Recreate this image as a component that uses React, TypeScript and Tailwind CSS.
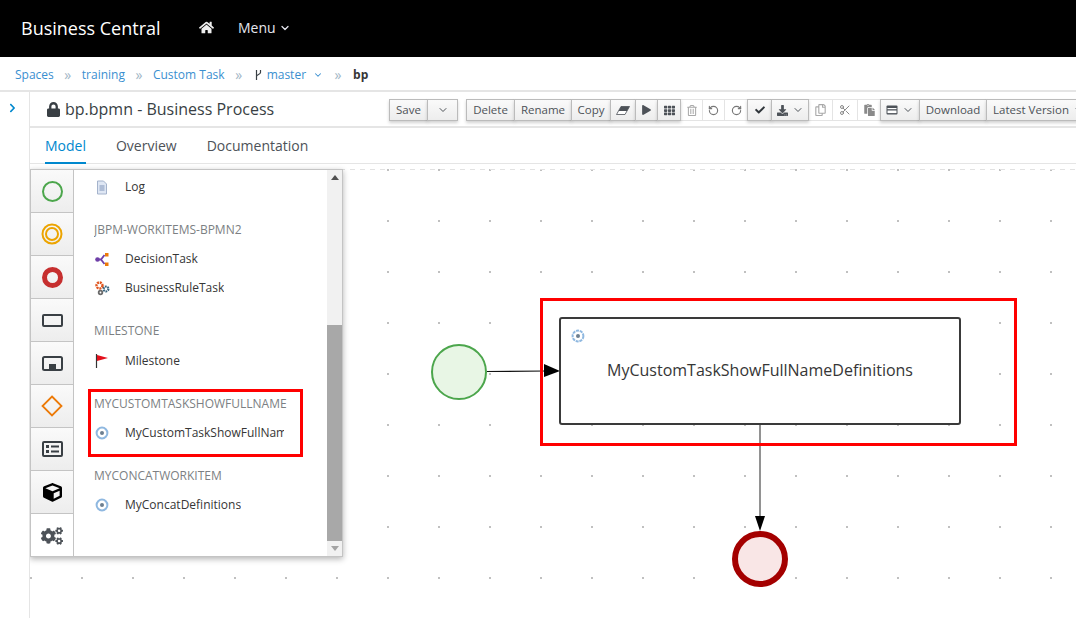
import React from "react";
import { FaHome, FaLock, FaPlay, FaTh, FaRegTrashAlt, FaCheck, FaDownload, FaRegCopy, FaPaste, FaCube, FaCogs, FaChevronRight } from "react-icons/fa";
import { LuChevronDown, LuRotateCcw, LuRotateCw, LuScissors } from "react-icons/lu";

const F = { fontFamily: '"Open Sans", "Liberation Sans", sans-serif' };

function Btn({ w, children, off }: { w: string; children: React.ReactNode; off?: boolean }) {
  return (
    <div className={`${w} h-[22px] -ml-px first:ml-0 flex items-center justify-center gap-1 border text-[11.5px] shrink-0 ${off ? "border-[#e4e4e4] bg-white text-[#a9a9a9]" : "border-[#bbbbbb] bg-gradient-to-b from-[#fafafa] to-[#ededed] text-[#4d5258] shadow-[0_2px_3px_rgba(0,0,0,0.18)] z-10"}`}>
      {children}
    </div>
  );
}

function Chev() {
  return <LuChevronDown className="text-[#4d5258] w-3 h-3" />;
}

function Sep({ w }: { w: string }) {
  return <span className={`${w} text-center text-[14px] leading-none text-[#9fb6c6] shrink-0`}>»</span>;
}

function Cell({ children, active }: { children: React.ReactNode; active?: boolean }) {
  return (
    <div className={`h-[43px] shrink-0 flex items-center justify-center border-b border-[#c4c4c4] last:border-b-0 ${active ? "bg-white" : "bg-gradient-to-b from-[#fafafa] to-[#ededed]"}`}>
      {children}
    </div>
  );
}

function Item({ icon, label }: { icon: React.ReactNode; label: string }) {
  return (
    <div className="flex items-center h-[20px]">
      <div className="w-[31px] flex justify-start pl-[1px] shrink-0">{icon}</div>
      <span className="text-[12px] text-[#363636] whitespace-nowrap max-w-[159px] overflow-hidden">{label}</span>
    </div>
  );
}

function Head({ children }: { children: React.ReactNode }) {
  return <div className="text-[12px] text-[#7c7f83] h-[20px] leading-[20px] whitespace-nowrap">{children}</div>;
}

function Svc({ dashed }: { dashed?: boolean }) {
  return (
    <svg width="14" height="14" viewBox="0 0 14 14">
      <circle cx="7" cy="7" r="5.4" fill="#fff" stroke="#8fb8e0" strokeWidth="2" strokeDasharray={dashed ? "3 0.8" : undefined} />
      <circle cx="7" cy="7" r="2" fill="#6d7f90" />
    </svg>
  );
}

export default function App() {
  return (
    <div className="w-[1076px] h-[618px] overflow-hidden bg-white flex flex-col" style={F}>
      <header className="h-[57px] bg-black flex items-center text-white shrink-0">
        <div className="ml-[21px] text-[18px] w-[178px] shrink-0">Business Central</div>
        <FaHome className="w-[15px] h-[15px] text-[#eeeeee] -mt-[3px]" />
        <div className="ml-[24px] flex items-center gap-[3px] text-[14px] text-[#e4e6ee] -mt-[3px]">
          Menu <LuChevronDown className="w-[12px] h-[12px] mt-[1px] stroke-[2.5]" />
        </div>
      </header>

      <nav className="h-[35px] border-b-2 border-[#e5e5e5] flex items-center pl-[15px] pt-[3px] text-[12px] text-[#3a8fd0] shrink-0">
        <span>Spaces</span>
        <Sep w="w-[28px]" />
        <span>training</span>
        <Sep w="w-[28px]" />
        <span>Custom Task</span>
        <Sep w="w-[28px]" />
        <svg width="9" height="12" viewBox="0 0 9 12" className="shrink-0">
          <path d="M3.5 1v10M7.5 1v2.5c0 2-4 2-4 4" fill="none" stroke="#393f44" strokeWidth="1.2" />
        </svg>
        <span className="ml-[5px]">master</span>
        <LuChevronDown className="ml-[7px] w-[10px] h-[10px] stroke-[2.5]" />
        <Sep w="w-[30px]" />
        <span className="font-bold text-[#363636]">bp</span>
      </nav>

      <div className="flex-1 flex min-h-0">
        <aside className="w-[30px] border-r border-[#e5e5e5] shrink-0 pt-[11px] pl-[8px]">
          <FaChevronRight className="w-[9px] h-[10px] text-[#0088ce]" />
        </aside>

        <main className="flex-1 flex flex-col min-w-0">
          <div className="h-[36px] border-b-2 border-[#e5e5e5] flex items-center shrink-0">
            <FaLock className="ml-[17px] w-[13px] h-[15px] text-[#393f44] shrink-0" />
            <span className="ml-[5px] text-[16px] text-[#393f44] w-[324px] shrink-0">bp.bpmn - Business Process</span>
            <div className="flex items-center mt-[2px] shrink-0">
              <Btn w="w-[39px]">Save</Btn>
              <Btn w="w-[31px]"><Chev /></Btn>
            </div>
            <div className="flex items-center ml-[8px] mt-[2px] shrink-0">
              <Btn w="w-[49px]">Delete</Btn>
              <Btn w="w-[58px]">Rename</Btn>
              <Btn w="w-[40px]">Copy</Btn>
              <Btn w="w-[26px]">
                <svg width="14" height="9" viewBox="0 0 14 9"><path d="M5 0.5h8.5L9 8.5H0.5z" fill="#fff" stroke="#4d5258" strokeWidth="0.8" /><path d="M5 0.5h8.5L11 5H2.6z" fill="#4d5258" /></svg>
              </Btn>
              <Btn w="w-[23px]"><FaPlay className="w-[9px] h-[10px]" /></Btn>
              <Btn w="w-[24px]"><FaTh className="w-[11px] h-[11px]" /></Btn>
              <Btn w="w-[23px]" off><FaRegTrashAlt className="w-[10px] h-[11px]" /></Btn>
              <Btn w="w-[23px]" off><LuRotateCcw className="w-[11px] h-[11px] text-[#777] stroke-[2.5]" /></Btn>
              <Btn w="w-[24px]" off><LuRotateCw className="w-[11px] h-[11px] text-[#777] stroke-[2.5]" /></Btn>
              <Btn w="w-[25px]"><FaCheck className="w-[10px] h-[10px] text-[#30363b]" /></Btn>
              <Btn w="w-[38px]"><FaDownload className="w-[11px] h-[11px]" /><Chev /></Btn>
              <Btn w="w-[25px]" off><FaRegCopy className="w-[11px] h-[12px]" /></Btn>
              <Btn w="w-[26px]" off><LuScissors className="w-[12px] h-[12px] text-[#8a8a8a]" /></Btn>
              <Btn w="w-[24px]" off><FaPaste className="w-[11px] h-[12px] text-[#8a8a8a]" /></Btn>
              <Btn w="w-[40px]">
                <svg width="12" height="10" viewBox="0 0 12 10"><rect x="0.5" y="0.5" width="11" height="9" rx="1" fill="#4d5258" /><rect x="1.5" y="3" width="9" height="1.2" fill="#fff" /><rect x="1.5" y="5.5" width="9" height="2.6" fill="#fff" /></svg>
                <Chev />
              </Btn>
              <Btn w="w-[68px]">Download</Btn>
              <Btn w="w-[106px]">
                <span className="whitespace-nowrap">Latest Version</span><Chev />
              </Btn>
            </div>
          </div>

          <div className="h-[36px] border-b border-[#e5e5e5] flex items-stretch pl-[15px] gap-[30px] text-[14px] text-[#4d5258] shrink-0">
            <div className="border-b-2 border-[#0088ce] text-[#0088ce] flex items-center h-[36px]">Model</div>
            <div className="flex items-center">Overview</div>
            <div className="flex items-center">Documentation</div>
          </div>

          <section className="relative flex-1 overflow-hidden bg-[radial-gradient(circle_at_1px_1px,#c0c0c0_1.1px,transparent_1.3px)] bg-[size:51px_51px] bg-[position:0px_5px]">
            <div className="absolute left-0 right-0 top-[5px] h-px bg-[repeating-linear-gradient(90deg,#e2e2e2_0_5px,transparent_5px_10px)]" />

            <svg className="absolute left-0 top-0" width="1046" height="454">
              <line x1="457" y1="207.5" x2="516" y2="207" stroke="#111" strokeWidth="1.2" />
              <polygon points="514,200 530,207 514,213" fill="#000" />
              <line x1="730" y1="261" x2="730" y2="353" stroke="#777" strokeWidth="1.6" />
              <polygon points="725,352 735,352 730,367" fill="#000" />
            </svg>

            <div className="absolute left-[401px] top-[180px] w-[56px] h-[56px] rounded-full border-2 border-[#4ca64c] bg-[#e8f6e5]" />
            <div className="absolute left-[702px] top-[367px] w-[56px] h-[56px] rounded-full border-[6px] border-[#a40000] bg-[#f9e6e6]" />

            <div className="absolute left-[529px] top-[153px] w-[402px] h-[108px] pb-[2px] border-2 border-[#3a3a3a] rounded-[3px] bg-white flex items-center justify-center text-[16px] text-[#363636]">
              <span className="absolute left-[10px] top-[10px] leading-none"><Svc dashed /></span>
              MyCustomTaskShowFullNameDefinitions
            </div>
            <div className="absolute left-[510px] top-[134px] w-[477px] h-[148px] border-[3px] border-[#ff0000]" />

            <div className="absolute left-0 top-[5px] w-[313px] h-[388px] bg-white border border-[#c4c4c4] shadow-[0_2px_6px_rgba(0,0,0,0.3)] flex overflow-hidden">
              <div className="w-[43px] border-r border-[#c4c4c4] flex flex-col shrink-0">
                <Cell><div className="w-[21px] h-[21px] rounded-full border-2 border-[#4ca64c]" /></Cell>
                <Cell>
                  <svg width="22" height="22" viewBox="0 0 22 22"><circle cx="11" cy="11" r="9.5" fill="none" stroke="#eca400" strokeWidth="2" /><circle cx="11" cy="11" r="6" fill="none" stroke="#eca400" strokeWidth="2" /></svg>
                </Cell>
                <Cell><div className="w-[21px] h-[21px] rounded-full border-[5px] border-[#c62f2f]" /></Cell>
                <Cell><div className="w-[21px] h-[13px] rounded-[2px] border-2 border-[#393f44]" /></Cell>
                <Cell>
                  <svg width="21" height="15" viewBox="0 0 21 15"><rect x="1" y="1" width="19" height="13" rx="1.5" fill="none" stroke="#393f44" strokeWidth="2" /><rect x="7" y="8" width="7" height="6" fill="#393f44" /></svg>
                </Cell>
                <Cell>
                  <svg width="22" height="22" viewBox="0 0 22 22"><path d="M11 1.5 L20.5 11 L11 20.5 L1.5 11 Z" fill="none" stroke="#ec7a08" strokeWidth="1.8" /></svg>
                </Cell>
                <Cell>
                  <svg width="21" height="16" viewBox="0 0 21 16"><rect x="1" y="1" width="19" height="14" rx="1" fill="none" stroke="#393f44" strokeWidth="2" /><rect x="4" y="4" width="3" height="3" fill="#393f44" /><rect x="4" y="9" width="3" height="3" fill="#393f44" /><rect x="9" y="4.5" width="8" height="2" fill="#393f44" /><rect x="9" y="9.5" width="8" height="2" fill="#393f44" /></svg>
                </Cell>
                <Cell><FaCube className="w-[19px] h-[19px] text-black" /></Cell>
                <Cell active><FaCogs className="w-[22px] h-[20px] text-[#4d5258]" /></Cell>
              </div>
              <div className="flex-1 min-w-0 flex">
                <div className="w-[220px] ml-[20px] overflow-hidden shrink-0 relative">
                  <div className="absolute top-[7px] left-0 w-full">
                    <Item label="Log" icon={
                      <svg width="14" height="15" viewBox="0 0 14 15"><path d="M2.5 1h6l3 3v10h-9z" fill="#dfe7f4" stroke="#a4b3cc" /><path d="M4.5 6h5M4.5 8h5M4.5 10h5" stroke="#7e93b8" /></svg>
                    } />
                    <div className="mt-[23px]"><Head>JBPM-WORKITEMS-BPMN2</Head></div>
                    <div className="mt-[9px]">
                      <Item label="DecisionTask" icon={
                        <svg width="15" height="15" viewBox="0 0 15 15"><path d="M3 7.5 H6 L9.5 3 M6 7.5 L9.5 12" stroke="#6e3fa8" strokeWidth="1.8" fill="none" /><circle cx="2.5" cy="7.5" r="2.3" fill="#6e3fa8" /><rect x="10" y="1" width="3.5" height="3.5" fill="#ec7a08" /><rect x="10" y="10.5" width="3.5" height="3.5" fill="#ec7a08" /></svg>
                      } />
                    </div>
                    <div className="mt-[9px]">
                      <Item label="BusinessRuleTask" icon={
                        <svg width="15" height="15" viewBox="0 0 15 15"><circle cx="4.5" cy="4.5" r="3" fill="none" stroke="#e0561f" strokeWidth="2.4" strokeDasharray="2 0.8" /><circle cx="11" cy="8" r="2.4" fill="none" stroke="#39657f" strokeWidth="2.2" strokeDasharray="1.6 0.7" /><circle cx="5.5" cy="11.5" r="1.8" fill="none" stroke="#6b6b6b" strokeWidth="1.8" /></svg>
                      } />
                    </div>
                    <div className="mt-[23px]"><Head>MILESTONE</Head></div>
                    <div className="mt-[10px]">
                      <Item label="Milestone" icon={
                        <svg width="14" height="14" viewBox="0 0 14 14"><path d="M1.5 0v14" stroke="#333" strokeWidth="1.2" /><path d="M2 1 L13 4 L2 7 Z" fill="#e3101c" /></svg>
                      } />
                    </div>
                    <div className="mt-[23px]"><Head>MYCUSTOMTASKSHOWFULLNAME</Head></div>
                    <div className="mt-[9px]"><Item label="MyCustomTaskShowFullNameDefinitions" icon={<Svc />} /></div>
                    <div className="mt-[23px]"><Head>MYCONCATWORKITEM</Head></div>
                    <div className="mt-[9px]"><Item label="MyConcatDefinitions" icon={<Svc />} /></div>
                  </div>
                </div>
                <div className="w-[15px] ml-auto bg-[#f1f1f1] flex flex-col items-center relative">
                  <div className="w-0 h-0 mt-[5px] border-x-[4px] border-x-transparent border-b-[5px] border-b-[#505050]" />
                  <div className="absolute top-[155px] left-0 w-full h-[216px] bg-[#a8a8a8]" />
                  <div className="mt-auto mb-[5px] w-0 h-0 border-x-[4px] border-x-transparent border-t-[5px] border-t-[#a3a3a3]" />
                </div>
              </div>
            </div>

            <div className="absolute left-[58px] top-[225px] w-[215px] h-[68px] border-[3px] border-[#ff0000]" />
          </section>
        </main>
      </div>
    </div>
  );
}
